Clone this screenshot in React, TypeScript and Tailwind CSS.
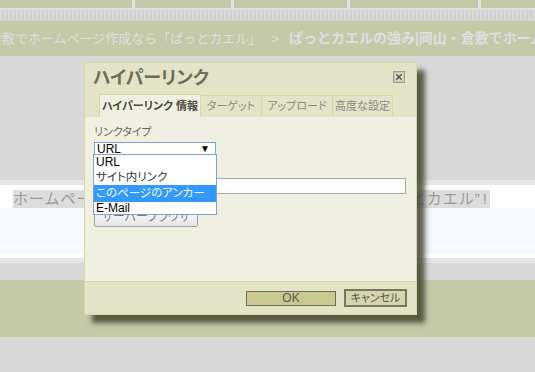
import React from "react";

const font = "font-['Liberation_Sans','Noto_Sans_CJK_JP',sans-serif]";

// top nav boxes
const navWidths = ["w-[132px]", "w-[96px]", "w-[113px]", "w-[128px]", "flex-1"];

const tabs = [
  { label: "ターゲット", w: "w-[61px]" },
  { label: "アップロード", w: "w-[71px]" },
  { label: "高度な設定", w: "w-[60px]" },
];

export default function App() {
  return (
    <div className={`relative w-[535px] h-[372px] overflow-hidden bg-[#d8d8d8] ${font}`}>
      {/* page behind the dialog */}
      <div className="flex gap-[3px] h-[8px] bg-[#e2e2e2]">
        {navWidths.map((w, i) => (
          <div key={i} className={`${w} h-full bg-[#c4caa8]`} />
        ))}
      </div>
      <div className="h-[2px] bg-[#e0e0e0]" />
      <div className="h-[11px] bg-[repeating-linear-gradient(90deg,#d9d9d9_0_2px,#cfcfcf_2px_4px)]" />
      <div className="h-[35px] bg-[#c4caa8] flex items-center whitespace-nowrap overflow-hidden text-[#dedede]">
        <span className="text-[13px] ml-[-11px]">倉敷でホームページ作成なら「ぱっとカエル」</span>
        <span className="text-[13px] mx-[10px]">&gt;</span>
        <span className="text-[14px] font-bold">ぱっとカエルの強み|岡山・倉敷でホームページ作成</span>
      </div>
      <div className="h-[124px]" />
      <div className="h-[5px] bg-[#e5e5e5]" />
      <div className="h-[73px] bg-white flex flex-col">
        <div className="h-[23px] pt-[5px] flex justify-between pl-[13px] pr-[45px] text-[15px] leading-[18px] tracking-[1px] text-[#9a9a9a] whitespace-nowrap">
          <span className="bg-[#dcdcdc]">ホームページ作成なら</span>
          <span className="bg-[#dcdcdc]">
            ならぱっとカエル<span className="tracking-[3px] [font-feature-settings:'palt']">”!</span>
          </span>
        </div>
        <div className="h-[45px] bg-[#f5f9ff]" />
      </div>
      <div className="h-[5px] bg-[#e5e5e5]" />
      <div className="h-[17px]" />
      <div className="h-[57px] bg-[#c4caa8]" />

      {/* dialog */}
      <div className="absolute left-[84px] top-[62px] w-[333px] h-[253px] border border-[#d6d69f] bg-[#e3e3c8] shadow-[8px_8px_5px_rgba(60,60,40,0.8)] flex flex-col whitespace-nowrap [font-feature-settings:'palt']">
        <div className="relative h-[31px] pl-[8px] pt-[3px]">
          <div className="text-[18px] leading-[24px] font-bold text-[#6e6e58]">ハイパーリンク</div>
          <svg className="absolute right-[11px] top-[8px]" width="12" height="12" viewBox="0 0 12 12">
            <rect x="0.5" y="0.5" width="11" height="11" fill="#c9c9b2" stroke="#9f9f8c" />
            <rect x="2" y="2" width="8" height="8" fill="#d9d9c6" />
            <path d="M3.3 3.3 L8.7 8.7 M8.7 3.3 L3.3 8.7" stroke="#55554a" strokeWidth="1.5" />
          </svg>
        </div>
        <div className="flex pl-[14px] h-[23px] items-end">
          <div className="w-[102px] h-[23px] flex items-center justify-center bg-[#f0f0e2] border border-b-0 border-[#d6d69f] text-[11px] font-bold text-[#4a4a40]">
            ハイパーリンク 情報
          </div>
          {tabs.map((t) => (
            <div
              key={t.label}
              className={`${t.w} h-[22px] flex items-center justify-center border border-b-0 border-l-0 border-[#d6d69f] text-[11px] text-[#8c8c84]`}
            >
              {t.label}
            </div>
          ))}
        </div>
        <div className="relative flex-1 bg-[#f0f0e2] px-[9px] pt-[8px]">
          <div className="text-[11px] leading-[14px] text-[#666660]">リンクタイプ</div>
          <div className="mt-[3px] w-[122px] h-[13px] bg-white border border-[#7f9fd9] flex items-center justify-between pl-[2px] pr-[5px] text-[12px] leading-[12px] text-black">
            <span>URL</span>
            <span className="text-[10px]">▼</span>
          </div>
          <div className="mt-[8px] text-[11px] leading-[14px] text-[#666660]">URL</div>
          <div className="mt-[1px] w-[312px] h-[16px] bg-white border border-[#a8a8a8]" />
          <div className="mt-[13px] w-[104px] h-[20px] border border-[#a0a0a0] rounded-[2px] bg-[linear-gradient(#ffffff,#e4e4e4)] flex items-center justify-center text-[12px] text-[#777]">
            サーバーブラウザ
          </div>

          {/* open dropdown list */}
          <div className="absolute left-[8px] top-[37px] w-[124px] bg-white border border-[#7f9fd9] text-[12px] text-black flex flex-col">
            <div className="h-[14px] leading-[14px] pl-[2px]">URL</div>
            <div className="h-[16px] leading-[16px] pl-[2px] text-[11.5px] text-[#333]">サイト内リンク</div>
            <div className="h-[17px] leading-[17px] pl-[2px] text-[11.5px] bg-[#3399ff] text-white">このページのアンカー</div>
            <div className="h-[12px] leading-[12px] pl-[2px]">E-Mail</div>
          </div>
        </div>
        <div className="h-[33px] border-t border-[#d6d69f] flex items-center justify-end gap-[8px] pr-[9px]">
          <div className="w-[90px] h-[15px] bg-[#c8c890] border border-[#6e6e55] flex items-center justify-center text-[12px] text-[#5a5a4a]">
            OK
          </div>
          <div className="w-[63px] h-[18px] bg-[#d4d4ae] border-[2px] border-[#77775e] flex items-center justify-center text-[11px] text-[#5a5a4a]">
            キャンセル
          </div>
        </div>
      </div>
    </div>
  );
}
